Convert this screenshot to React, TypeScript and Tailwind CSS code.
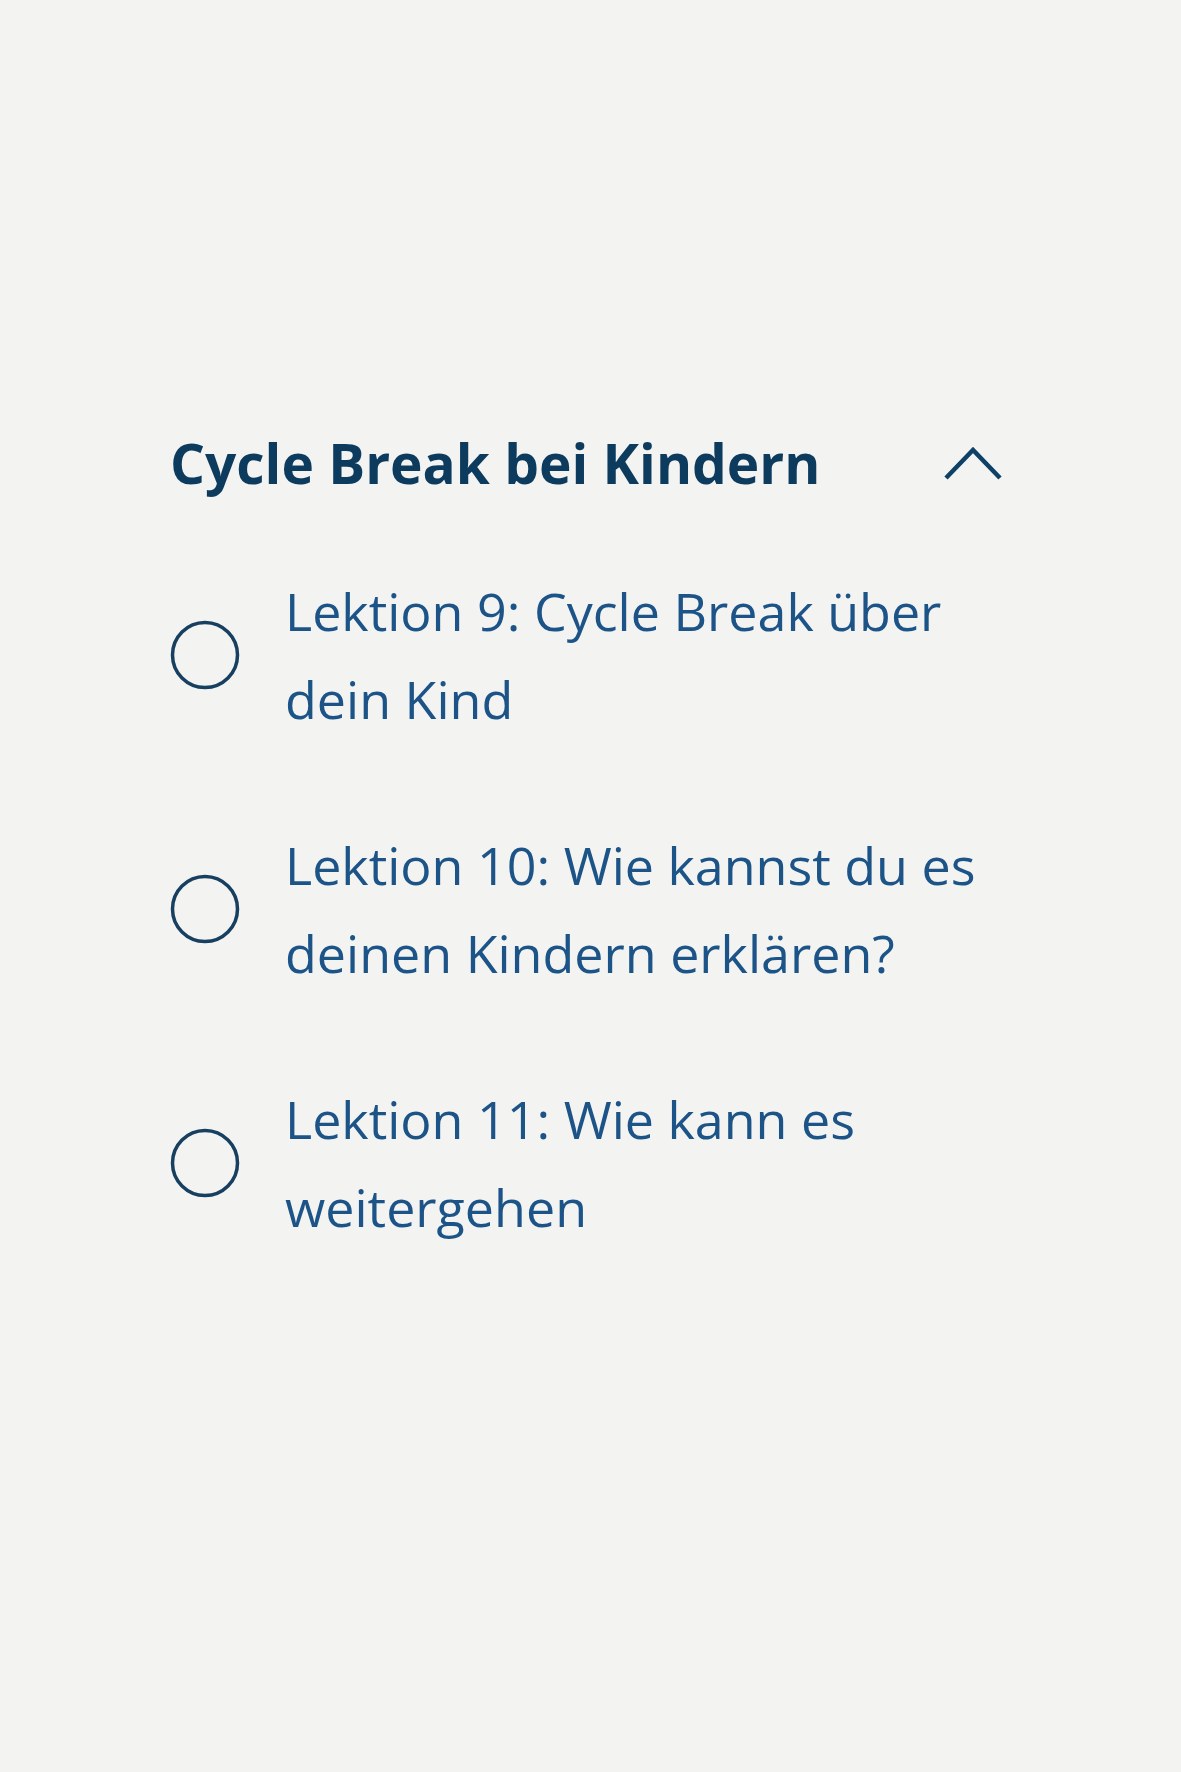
import React from 'react';

const lessons = [
  'Lektion 9: Cycle Break über dein Kind',
  'Lektion 10: Wie kannst du es deinen Kindern erklären?',
  'Lektion 11: Wie kann es weitergehen',
];

export default function App() {
  return (
    <main
      className="min-h-screen bg-[#f3f3f2] pl-[170px] pt-[431px]"
      style={{ fontFamily: '"Open Sans", "Noto Sans", sans-serif' }}
    >
      <section className="w-[833px]">
        {/* Module header */}
        <div className="flex items-center justify-between">
          <h2 className="text-[55px] leading-[64px] font-bold text-[#0d3b5e]">
            Cycle Break bei Kindern
          </h2>
          <svg width="60" height="36" viewBox="0 0 60 36" fill="none" stroke="#0f4166" strokeWidth={4.5}>
            <polyline points="3,33 30,5 57,33" />
          </svg>
        </div>

        {/* Lessons */}
        <ul className="mt-[72px] flex flex-col gap-[78px]">
          {lessons.map((title) => (
            <LessonRow key={title} title={title} />
          ))}
        </ul>
      </section>
    </main>
  );
}

function LessonRow({ title }: { title: string }) {
  return (
    <li className="flex items-center gap-[45px]">
      <svg className="shrink-0" width="70" height="70" viewBox="0 0 70 70" fill="none">
        <circle cx="35" cy="35" r="32.5" stroke="#173f5f" strokeWidth={3.5} />
      </svg>
      <span className="text-[52px] leading-[88px] text-[#1d5488]">{title}</span>
    </li>
  );
}
